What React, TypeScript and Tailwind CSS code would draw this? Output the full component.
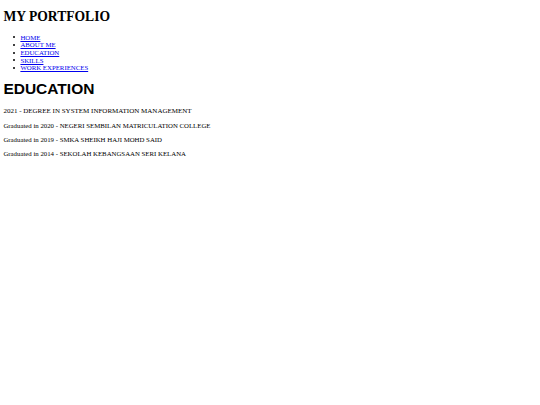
import React from 'react';

const links = ['HOME', 'ABOUT ME', 'EDUCATION', 'SKILLS', 'WORK EXPERIENCES'];

const schools = [
  'Graduated in 2020 - NEGERI SEMBILAN MATRICULATION COLLEGE',
  'Graduated in 2019 - SMKA SHEIKH HAJI MOHD SAID',
  'Graduated in 2014 - SEKOLAH KEBANGSAAN SERI KELANA',
];

export default function App() {
  return (
    <div className="min-h-[405px] w-full bg-white px-[3.4px] pt-[9px] text-black font-['Liberation_Serif',serif]">
      <h1 className="text-[13.6px] font-bold leading-[15.5px]">MY PORTFOLIO</h1>
      <ul className="mt-[9px] pl-[10px] text-[6.8px] leading-[7.7px]">
        {links.map(l => (
          <li key={l} className="flex items-center gap-[5px]">
            <span className="h-[2px] w-[2px] rounded-full bg-black" />
            <a href="#" className="text-[#0000ee] underline">{l}</a>
          </li>
        ))}
      </ul>
      <h2 className="mt-[8px] text-[15.5px] font-bold leading-[17.5px] font-['Liberation_Sans',sans-serif]">EDUCATION</h2>
      <div className="mt-[10px] flex flex-col gap-[6.6px] text-[6.8px] leading-[7.7px]">
        <p className="text-[7px]">2021 - DEGREE IN SYSTEM INFORMATION MANAGEMENT</p>
        {schools.map(s => (
          <p key={s}>{s}</p>
        ))}
      </div>
    </div>
  );
}
